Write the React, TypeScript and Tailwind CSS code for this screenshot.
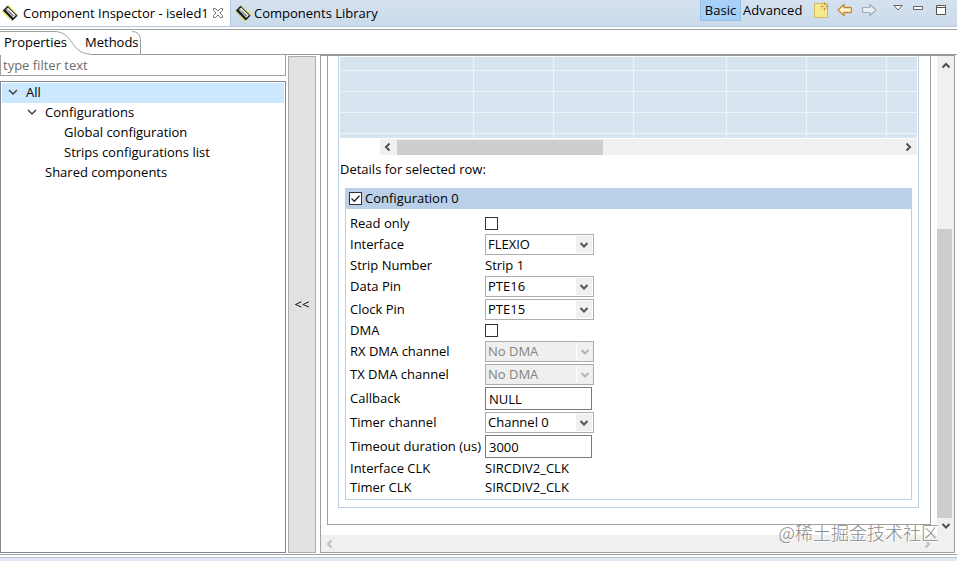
import type { ReactNode } from "react";
import clsx from "clsx";

type Field = {
  id: string;
  label: string;
  kind: "text" | "check" | "select" | "input";
  value?: string;
  disabled?: boolean;
};

const fields: Field[] = [
  { id: "readOnly", label: "Read only", kind: "check" },
  { id: "interface", label: "Interface", kind: "select", value: "FLEXIO" },
  { id: "strip", label: "Strip Number", kind: "text", value: "Strip 1" },
  { id: "dataPin", label: "Data Pin", kind: "select", value: "PTE16" },
  { id: "clockPin", label: "Clock Pin", kind: "select", value: "PTE15" },
  { id: "dma", label: "DMA", kind: "check" },
  { id: "rxDma", label: "RX DMA channel", kind: "select", value: "No DMA", disabled: true },
  { id: "txDma", label: "TX DMA channel", kind: "select", value: "No DMA", disabled: true },
  { id: "callback", label: "Callback", kind: "input", value: "NULL" },
  { id: "timer", label: "Timer channel", kind: "select", value: "Channel 0" },
  { id: "timeout", label: "Timeout duration (us)", kind: "input", value: "3000" },
  { id: "ifClk", label: "Interface CLK", kind: "text", value: "SIRCDIV2_CLK" },
  { id: "timerClk", label: "Timer CLK", kind: "text", value: "SIRCDIV2_CLK" },
];

const treeItems = [
  { name: "All", indent: "pl-[6px]", open: true, selected: true },
  { name: "Configurations", indent: "pl-[25px]", open: true },
  { name: "Global configuration", indent: "pl-[44px]" },
  { name: "Strips configurations list", indent: "pl-[44px]" },
  { name: "Shared components", indent: "pl-[25px]" },
];

const rowHeights = ["h-[14px]", "h-[21px]", "h-[21px]", "h-[21px]", "h-[4px]"];
const colWidths = ["w-[134px]", "w-[80px]", "w-[80px]", "w-[93px]", "w-[80px]", "w-[80px]", ""];

const arrowPaths = {
  up: "M1.5 6.5 5 3l3.5 3.5",
  down: "M1.5 3 5 6.5 8.5 3",
  left: "M6.5 1.5 3 5l3.5 3.5",
  right: "M3.5 1.5 7 5 3.5 8.5",
};

function Arrow({ dir, className }: { dir: keyof typeof arrowPaths; className?: string }) {
  return (
    <svg viewBox="0 0 10 10" className={clsx("size-[10px] shrink-0", className)} fill="none" stroke="currentColor" strokeWidth="2">
      <path d={arrowPaths[dir]} />
    </svg>
  );
}

function ChipIcon() {
  return (
    <svg viewBox="0 0 16 16" className="size-4 shrink-0">
      <path d="M.8 5.800 10.200 15.500M5.800.8 15.500 10.200" stroke="#d8d42c" strokeWidth="2.200" strokeDasharray="1.400 1" />
      <path d="M.8 5.500 5.500.8 15.500 10.800 10.800 15.500z" fill="#1c1c1c" />
      <path d="m4 4.200 2-1.800 7.800 7.900-2.500 2.500-7.500-7.700z" fill="#f6f6f6" />
      <path d="m6 5.500 5.500 5.500" stroke="#222" strokeWidth="1" />
      <circle cx="4.600" cy="4.600" r="1" fill="#777" />
    </svg>
  );
}

function CheckBox({ id, checked }: { id: string; checked?: boolean }) {
  return (
    <span className="relative flex size-[13px] shrink-0">
      <input
        id={id}
        type="checkbox"
        defaultChecked={checked}
        className="peer size-[13px] appearance-none border border-[#333] bg-white"
      />
      <svg viewBox="0 0 13 13" className="pointer-events-none absolute inset-0 hidden peer-checked:block" fill="none" stroke="#222" strokeWidth="1.3">
        <path d="m2.500 6.500 2.800 2.800 5.200-5.600" />
      </svg>
    </span>
  );
}

function Control({ field }: { field: Field }) {
  if (field.kind === "check") return <CheckBox id={field.id} />;
  if (field.kind === "text") return <output id={field.id}>{field.value}</output>;
  if (field.kind === "input") {
    return (
      <input
        id={field.id}
        defaultValue={field.value}
        className="h-[23px] w-[107px] border border-[#7a7a7a] bg-white px-[3px]"
      />
    );
  }
  return (
    <span className="relative flex h-[21px] w-[109px]">
      <select
        id={field.id}
        disabled={field.disabled}
        className="w-full appearance-none border border-[#adadad] bg-white pl-[2px] text-black disabled:bg-[#efefef] disabled:text-[#838383] disabled:opacity-100"
      >
        <option>{field.value}</option>
      </select>
      <span
        className={clsx(
          "pointer-events-none absolute inset-y-[2px] right-[2px] flex w-4 items-center justify-center bg-[#f0f0f0]",
          field.disabled ? "border-l border-white text-[#b5b5b5]" : "text-[#555]"
        )}
      >
        <Arrow dir="down" />
      </span>
    </span>
  );
}

function FieldRow({ field }: { field: Field }) {
  return (
    <div
      className={clsx(
        "flex items-center",
        field.kind === "select" ? "h-[21px]" : field.kind === "input" ? "h-[23px]" : "h-[17px]"
      )}
    >
      <label htmlFor={field.id} className="w-[135px] shrink-0">
        {field.label}
      </label>
      <Control field={field} />
    </div>
  );
}

function ToolButton({ label, children, className }: { label: string; children: ReactNode; className?: string }) {
  return (
    <button aria-label={label} className={clsx("flex h-4 items-center justify-center", className)}>
      {children}
    </button>
  );
}

function ViewBar() {
  return (
    <header className="flex h-[27px] shrink-0 border-b border-[#b4c8de] bg-linear-to-b from-[#d5e1ef] to-[#cbdbeb]">
      <div className="flex w-[231px] shrink-0 items-center border-r border-[#b4c8de] bg-white pl-[2px]">
        <ChipIcon />
        <button className="ml-[5px]">Component Inspector - iseled1</button>
        <button aria-label="Close" className="ml-auto mr-[6px]">
          <svg viewBox="0 0 12 12" className="size-3" fill="#fff" stroke="#777">
            <path d="M1.500 1.500h2L6 4l2.500-2.500h2v2L8 6l2.500 2.500v2h-2L6 8l-2.500 2.500h-2v-2L4 6 1.500 3.500z" />
          </svg>
        </button>
      </div>
      <button className="flex items-center gap-[3px] pl-1">
        <ChipIcon />
        Components Library
      </button>
      <div className="ml-auto flex items-start pr-[11px]">
        <button className="h-[21px] w-[41px] border border-t-0 border-[#92c0ec] bg-[#a6d0f5] pt-px">Basic</button>
        <button className="h-[21px] w-[59px] pl-[2px] text-left">Advanced</button>
        <ToolButton label="New" className="ml-[13px] mt-[2px] w-4">
          <svg viewBox="0 0 16 16" className="size-4">
            <path d="M1.500 1.500h13v14h-13z" fill="#f6e98d" stroke="#d3b866" />
            <path d="M11.500.5v8M7.500 4.500h8" stroke="#b98d2c" />
            <path d="m9 2 5 5M14 2 9 7" stroke="#d8b450" />
            <circle cx="11.500" cy="4.500" r="1.300" fill="#fdf6c0" />
          </svg>
        </ToolButton>
        <ToolButton label="Back" className="ml-2 mt-[2px] w-4">
          <svg viewBox="0 0 16 16" className="size-4" fill="#fff3cf" stroke="#c4872b" strokeWidth="1.300" strokeLinejoin="round">
            <path d="M1 8l6-5.500v3h6.500q1 0 1 1v3q0 1-1 1H7v3z" />
          </svg>
        </ToolButton>
        <ToolButton label="Forward" className="ml-2 mt-[2px] w-4">
          <svg viewBox="0 0 16 16" className="size-4" fill="#e9eef4" stroke="#a3acb6" strokeWidth="1.200" strokeLinejoin="round">
            <path d="M15 8 9 2.500v3H2.500q-1 0-1 1v3q0 1 1 1H9v3z" />
          </svg>
        </ToolButton>
        <ToolButton label="View menu" className="ml-4 w-[10px]">
          <svg viewBox="0 0 10 6" className="h-[6px] w-[10px]" fill="#fff" stroke="#666">
            <path d="M.8.5h8.400L5 5z" />
          </svg>
        </ToolButton>
        <ToolButton label="Minimize" className="ml-[10px] w-[10px]">
          <svg viewBox="0 0 10 4" className="h-1 w-[10px]" fill="#fff" stroke="#666">
            <path d="M.5.5h9v3h-9z" />
          </svg>
        </ToolButton>
        <ToolButton label="Maximize" className="ml-[13px] mt-[2px] w-[10px]">
          <svg viewBox="0 0 10 10" className="size-[10px]" fill="#fff" stroke="#555">
            <path d="M.5.5h9v9h-9zM.5 2.500h9" />
          </svg>
        </ToolButton>
      </div>
    </header>
  );
}

function PageTabs() {
  return (
    <nav className="relative mt-[2px] flex h-[26px] shrink-0 items-center border-t border-[#a0a0a0] pl-1">
      <svg viewBox="0 0 142 26" className="absolute -top-px left-0 h-[26px] w-[142px]" fill="none" stroke="#a0a0a0">
        <path d="M0 2.500h54c20 0 16 22 36 22.500M132 2.500q8 0 8.500 8V25" />
      </svg>
      <div className="pointer-events-none absolute bottom-0 left-[90px] right-0 border-b border-[#999]" />
      <button className="relative w-[60px] whitespace-nowrap text-left">Properties</button>
      <button className="relative ml-[21px]">Methods</button>
    </nav>
  );
}

function Sidebar() {
  return (
    <aside className="flex w-[286px] shrink-0 flex-col">
      <input
        aria-label="Filter"
        placeholder="type filter text"
        className="h-[21px] shrink-0 border border-t-0 border-[#a0a0a0] px-[2px] placeholder:text-[#6d6d6d]"
      />
      <ul className="mt-[5px] min-h-0 flex-1 border border-[#828790] p-px">
        {treeItems.map((item) => (
          <li key={item.name} className={clsx("flex h-5 items-center pb-[2px]", item.indent, item.selected && "bg-[#cce8ff]")}>
            <span className="w-[18px] shrink-0">
              {item.open && (
                <svg viewBox="0 0 10 10" className="size-[10px]" fill="none" stroke="#404040" strokeWidth="1.500">
                  <path d="m1 3 4 4 4-4" />
                </svg>
              )}
            </span>
            {item.name}
          </li>
        ))}
      </ul>
    </aside>
  );
}

function ConfigGrid() {
  return (
    <table aria-label="Configurations" className="w-full table-fixed border-separate border-spacing-0 bg-[#d7e4f0]">
      <tbody>
        {rowHeights.map((height, row) => (
          <tr key={row} className={height}>
            {colWidths.map((width, col) => (
              <td key={col} className={clsx("p-0", width, row < 4 && "border-b border-[#edf3f9]", col < 6 && "border-r border-r-[#edf3f9]")} />
            ))}
          </tr>
        ))}
      </tbody>
    </table>
  );
}

function Details() {
  return (
    <main className="relative flex min-w-0 flex-1 flex-col border-x border-b border-[#a0a0a0]">
      <div className="flex min-h-0 flex-1">
        <div className="mb-[10px] ml-[6px] mr-[6px] flex-1 border border-t-0 border-[#a0a0a0] pb-4 pl-[10px] pr-[11px]">
          <div className="h-full border border-t-0 border-[#bccfe4] px-px pt-px">
            <ConfigGrid />
            <div className="ml-10 mt-px flex h-4 items-center bg-[#f0f0f0] text-[#505050]">
              <Arrow dir="left" className="mx-[3px]" />
              <div className="ml-px h-[15px] w-[206px] bg-[#cdcdcd]" />
              <Arrow dir="right" className="ml-auto mr-1" />
            </div>
            <p className="mt-1 leading-5">Details for selected row:</p>
            <section className="ml-[5px] mr-[5px] mt-[9px] border border-t-0 border-[#bccfe4]">
              <div className="-mx-px flex h-[21px] items-center gap-[3px] bg-[#bad0e8] pl-1">
                <CheckBox id="config0" checked />
                <label htmlFor="config0">Configuration 0</label>
              </div>
              <form className="flex flex-col gap-[2px] pb-[3px] pl-1 pt-[6px]">
                {fields.map((field) => (
                  <FieldRow key={field.id} field={field} />
                ))}
              </form>
            </section>
          </div>
        </div>
        <div className="flex w-[17px] shrink-0 flex-col items-center bg-[#f0f0f0] pb-1 pt-[5px] text-[#505050]">
          <Arrow dir="up" />
          <div className="mb-[3px] mt-auto h-[289px] w-[15px] self-start bg-[#cdcdcd]" />
          <Arrow dir="down" />
        </div>
      </div>
      <div className="flex h-[17px] shrink-0 items-center justify-between bg-[#f0f0f0] pl-1 pr-[22px] text-[#bfbfbf]">
        <Arrow dir="left" />
        <Arrow dir="right" />
      </div>
      <p className="absolute bottom-[6px] right-[15px] font-['Noto_Sans_CJK_SC',sans-serif] text-[18px] leading-7 font-light text-[#8a8a8a] [text-shadow:1px_1px_0_#fff]">
        @稀土掘金技术社区
      </p>
    </main>
  );
}

export default function App() {
  return (
    <div className="flex h-screen flex-col overflow-hidden bg-white font-['Open_Sans',sans-serif] text-[13px] leading-[17px] text-black">
      <ViewBar />
      <PageTabs />
      <div className="flex min-h-0 flex-1 pr-[2px]">
        <Sidebar />
        <button className="mx-[2px] mt-px w-[28px] shrink-0 border border-[#adadad] bg-[#e1e1e1]">&lt;&lt;</button>
        <div className="w-[2px] shrink-0" />
        <div className="flex min-w-0 flex-1 border-t border-[#999]">
          <Details />
        </div>
      </div>
      <footer className="mt-px h-[7px] shrink-0 border-t border-[#a0a0a0]">
        <div className="mt-[2px] h-1 border-t border-[#b8c4d6] bg-[#e4e8f4]" />
      </footer>
    </div>
  );
}
